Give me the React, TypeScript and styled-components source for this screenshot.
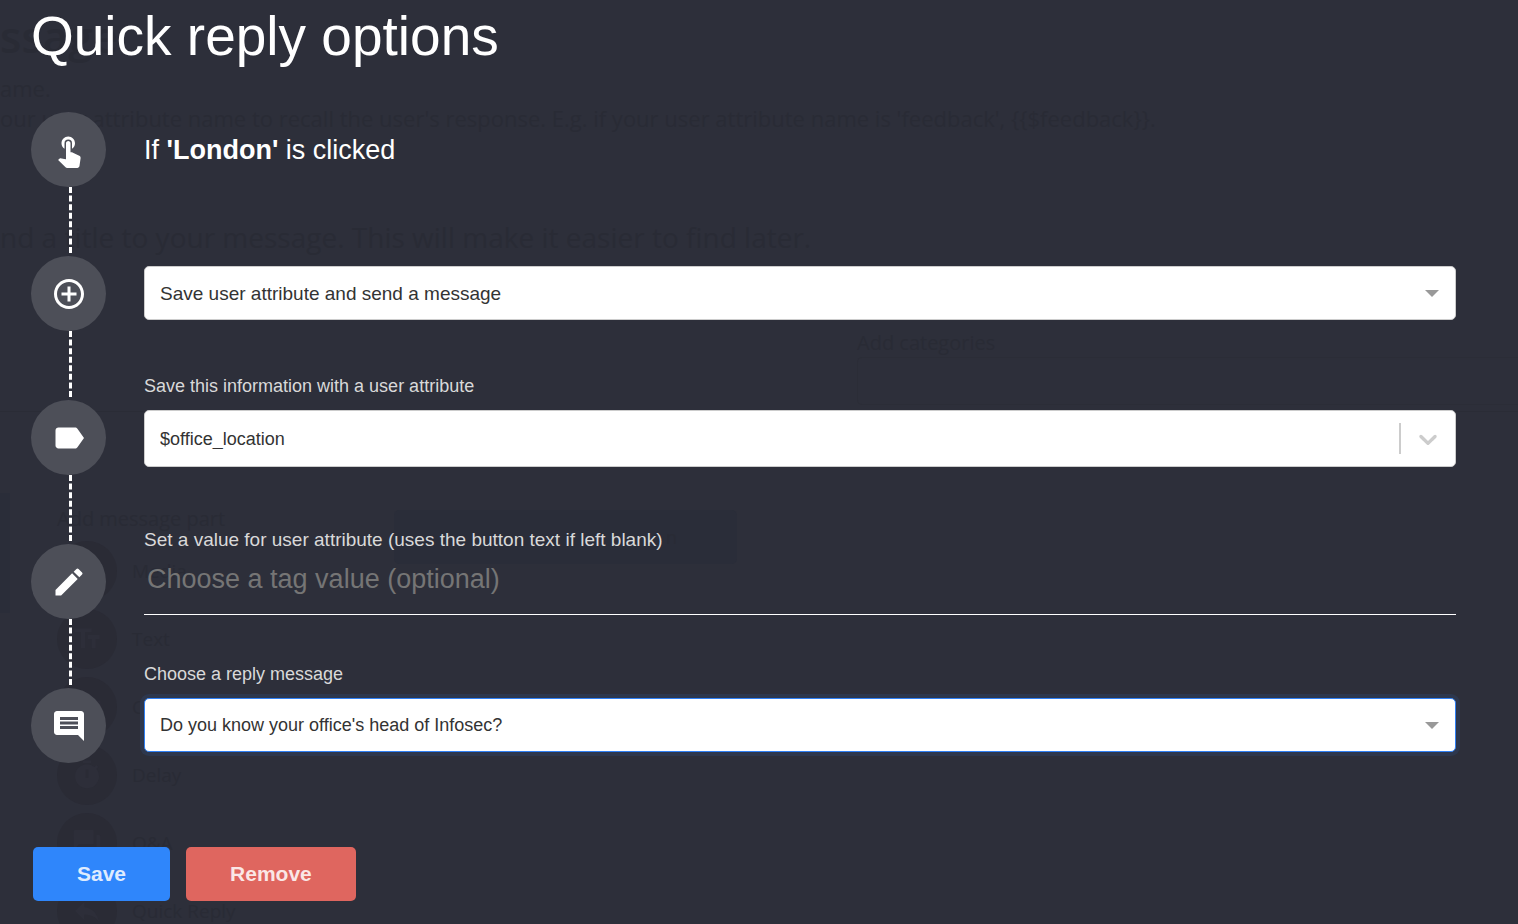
import React from 'react';
import styled, { createGlobalStyle, css } from 'styled-components';
import { MdAddCircleOutline, MdEdit, MdInsertComment, MdLabel, MdTouchApp, MdTextFields, MdTimer, MdImage, MdViewCarousel, MdQuestionAnswer, MdReply } from 'react-icons/md';

const GlobalStyle = createGlobalStyle`
  *, *::before, *::after { box-sizing: border-box; }
  body {
    margin: 0;
    background: #2d2f3a;
    color: #fff;
    font-family: "Liberation Sans", Arial, Helvetica, sans-serif;
  }
`;

const Screen = styled.div`
  position: relative;
  min-height: 100vh;
  overflow: hidden;
`;

/* The editor page, barely visible through the dialog's backdrop */
const Backdrop = styled.div`
  position: absolute;
  inset: 0;
  overflow: hidden;
  color: #292b35;
  font-family: "Open Sans", "Noto Sans", sans-serif;
  white-space: nowrap;
  user-select: none;
  pointer-events: none;
`;

const BackdropTitle = styled.div`
  font-size: 44px;
  font-weight: 600;
  line-height: 73px;
`;

const BackdropNote = styled.div`
  font-size: 22px;
  line-height: 30px;
`;

const BackdropHint = styled.div`
  margin-top: 84px;
  font-size: 28px;
  line-height: 40px;
`;

const BackdropCategories = styled.div`
  height: 155px;
  padding: 72px 0 0 857px;
  border-bottom: 1px solid #2a2c36;
  font-size: 20px;
  line-height: 28px;
`;

const BackdropCategoryBox = styled.div`
  height: 48px;
  border: 1px solid #2b2d37;
  border-right: 0;
  border-radius: 5px 0 0 5px;
`;

const BackdropBody = styled.div`
  display: flex;
  margin-top: 81px;
`;

const BackdropTab = styled.div`
  width: 10px;
  height: 120px;
  background: #2a2d39;
`;

const BackdropParts = styled.div`
  width: 384px;
  padding: 12px 0 0 47px;
  font-size: 20px;
  line-height: 28px;
`;

const BackdropPart = styled.div`
  display: flex;
  align-items: center;
  gap: 15px;
  height: 60px;
  margin-top: 8px;
  font-size: 19px;
`;

const BackdropDisc = styled.span`
  display: flex;
  align-items: center;
  justify-content: center;
  width: 60px;
  height: 60px;
  border-radius: 50%;
  background: #2a2b35;
  color: #2d2e39;
`;

const BackdropButton = styled.div`
  width: 343px;
  height: 54px;
  margin-top: 17px;
  padding-right: 60px;
  border-radius: 5px;
  background: #2a2d39;
  text-align: right;
  font-size: 18px;
  line-height: 54px;
`;

const Dialog = styled.form`
  position: relative;
  padding: 4px 62px 23px 31px;
`;

const Title = styled.h1`
  margin: 0;
  font-size: 55px;
  font-weight: 400;
  line-height: 64px;
`;

const Flow = styled.div`
  display: flex;
  gap: 38px;
  margin-top: 44px;
`;

const Rail = styled.ol`
  flex: none;
  width: 75px;
  margin: 0;
  padding: 0;
  list-style: none;
`;

const Step = styled.li`
  & + &::before {
    content: "";
    display: block;
    height: 66px;
    margin: 0 0 3px 38px;
    border-left: 3px dashed #fff;
  }
`;

const Disc = styled.span`
  display: flex;
  align-items: center;
  justify-content: center;
  height: 75px;
  border-radius: 50%;
  background: #4d4f58;
`;

const Fields = styled.div`
  flex: 1;
  min-width: 0;
`;

const Trigger = styled.p`
  margin: 0 0 77px;
  font-size: 27px;
  line-height: 77px;
`;

const Field = styled.div<{ $gap?: number }>`
  margin-bottom: ${({ $gap = 0 }) => $gap}px;
`;

const Label = styled.label<{ $large?: boolean }>`
  display: block;
  color: #d9d9d9;
  font-size: ${({ $large }) => ($large ? 19 : 18)}px;
  line-height: 24px;
`;

const SelectBox = styled.div<{ $spaced?: boolean }>`
  position: relative;
  margin-top: ${({ $spaced }) => ($spaced ? 12 : 0)}px;
`;

const Select = styled.select<{ $tall?: boolean; $large?: boolean; $active?: boolean }>`
  display: block;
  width: 100%;
  height: ${({ $tall }) => ($tall ? 57 : 54)}px;
  padding: 0 60px 0 15px;
  appearance: none;
  border: 1px solid #ccc;
  border-radius: 5px;
  outline: none;
  background: #fff;
  color: #333;
  font-family: inherit;
  font-size: ${({ $large }) => ($large ? 19 : 18)}px;
  ${({ $active }) =>
    $active &&
    css`
      border-color: #2f80f5;
      box-shadow: 0 0 0 4px #2d374d;
    `}
`;

const Caret = styled.span`
  position: absolute;
  top: 24px;
  right: 17px;
  border: 7px solid transparent;
  border-top-color: #999;
  border-bottom-width: 0;
  pointer-events: none;
`;

const Indicator = styled.span`
  position: absolute;
  top: 13px;
  right: 1px;
  display: flex;
  align-items: center;
  justify-content: center;
  width: 56px;
  height: 31px;
  border-left: 2px solid #ccc;
  color: #ccc;
  pointer-events: none;
`;

const TextInput = styled.input`
  display: block;
  width: 100%;
  height: 63px;
  padding: 0 3px 8px;
  border: 0;
  border-bottom: 1px solid #fff;
  outline: none;
  background: transparent;
  color: #fff;
  font-family: inherit;
  font-size: 27px;
  &::placeholder { color: #757575; opacity: 1; }
`;

const Actions = styled.div`
  display: flex;
  gap: 16px;
  margin: 84px 0 0 2px;
`;

const Button = styled.button<{ $tone: string }>`
  height: 54px;
  padding: 0 44px;
  border: 0;
  border-radius: 5px;
  background: ${({ $tone }) => $tone};
  color: rgba(255, 255, 255, 0.85);
  font-family: inherit;
  font-size: 21px;
  font-weight: 700;
`;

const steps = [MdTouchApp, MdAddCircleOutline, MdLabel, MdEdit, MdInsertComment];

const parts = [
  { name: 'Media', Icon: MdImage },
  { name: 'Text', Icon: MdTextFields },
  { name: 'Carousel', Icon: MdViewCarousel },
  { name: 'Delay', Icon: MdTimer },
  { name: 'Q&A', Icon: MdQuestionAnswer },
  { name: 'Quick Reply', Icon: MdReply },
];

export default function App() {
  return (
    <Screen>
      <GlobalStyle />
      <Backdrop aria-hidden="true">
        <BackdropTitle>ssage</BackdropTitle>
        <BackdropNote>ame.</BackdropNote>
        <BackdropNote>
          our user attribute name to recall the user's response. E.g. if your user attribute name is 'feedback', {'{{$feedback}}'}.
        </BackdropNote>
        <BackdropHint>nd a title to your message. This will make it easier to find later.</BackdropHint>
        <BackdropCategories>
          Add categories
          <BackdropCategoryBox />
        </BackdropCategories>
        <BackdropBody>
          <BackdropTab />
          <BackdropParts>
            Add message part
            {parts.map(({ name, Icon }) => (
              <BackdropPart key={name}>
                <BackdropDisc><Icon size={32} /></BackdropDisc>
                {name}
              </BackdropPart>
            ))}
          </BackdropParts>
          <BackdropButton>n</BackdropButton>
        </BackdropBody>
      </Backdrop>
      <Dialog onSubmit={(e) => e.preventDefault()}>
        <Title>Quick reply options</Title>
        <Flow>
          <Rail aria-hidden="true">
            {steps.map((Icon, i) => (
              <Step key={i}>
                <Disc><Icon size={36} /></Disc>
              </Step>
            ))}
          </Rail>
          <Fields>
            <Trigger>If <strong>'London'</strong> is clicked</Trigger>
            <Field $gap={54}>
              <SelectBox>
                <Select aria-label="Action" $large>
                  <option>Save user attribute and send a message</option>
                </Select>
                <Caret />
              </SelectBox>
            </Field>
            <Field $gap={61}>
              <Label htmlFor="attribute">Save this information with a user attribute</Label>
              <SelectBox $spaced>
                <Select id="attribute" $tall>
                  <option>$office_location</option>
                </Select>
                <Indicator>
                  <svg width="30" height="30" viewBox="0 0 20 20" fill="currentColor">
                    <path d="M4.516 7.548c0.436-0.446 1.043-0.481 1.576 0l3.908 3.747 3.908-3.747c0.533-0.481 1.141-0.446 1.574 0 0.436 0.445 0.408 1.197 0 1.615-0.406 0.418-4.695 4.502-4.695 4.502-0.217 0.223-0.502 0.335-0.787 0.335s-0.57-0.112-0.789-0.335c0 0-4.287-4.084-4.695-4.502s-0.436-1.17 0-1.615z" />
                  </svg>
                </Indicator>
              </SelectBox>
            </Field>
            <Field $gap={47}>
              <Label htmlFor="value" $large>Set a value for user attribute (uses the button text if left blank)</Label>
              <TextInput id="value" placeholder="Choose a tag value (optional)" />
            </Field>
            <Field>
              <Label htmlFor="reply">Choose a reply message</Label>
              <SelectBox $spaced>
                <Select id="reply" $active>
                  <option>Do you know your office's head of Infosec?</option>
                </Select>
                <Caret />
              </SelectBox>
            </Field>
          </Fields>
        </Flow>
        <Actions>
          <Button type="submit" $tone="#2f86fb">Save</Button>
          <Button type="button" $tone="#df665f">Remove</Button>
        </Actions>
      </Dialog>
    </Screen>
  );
}
